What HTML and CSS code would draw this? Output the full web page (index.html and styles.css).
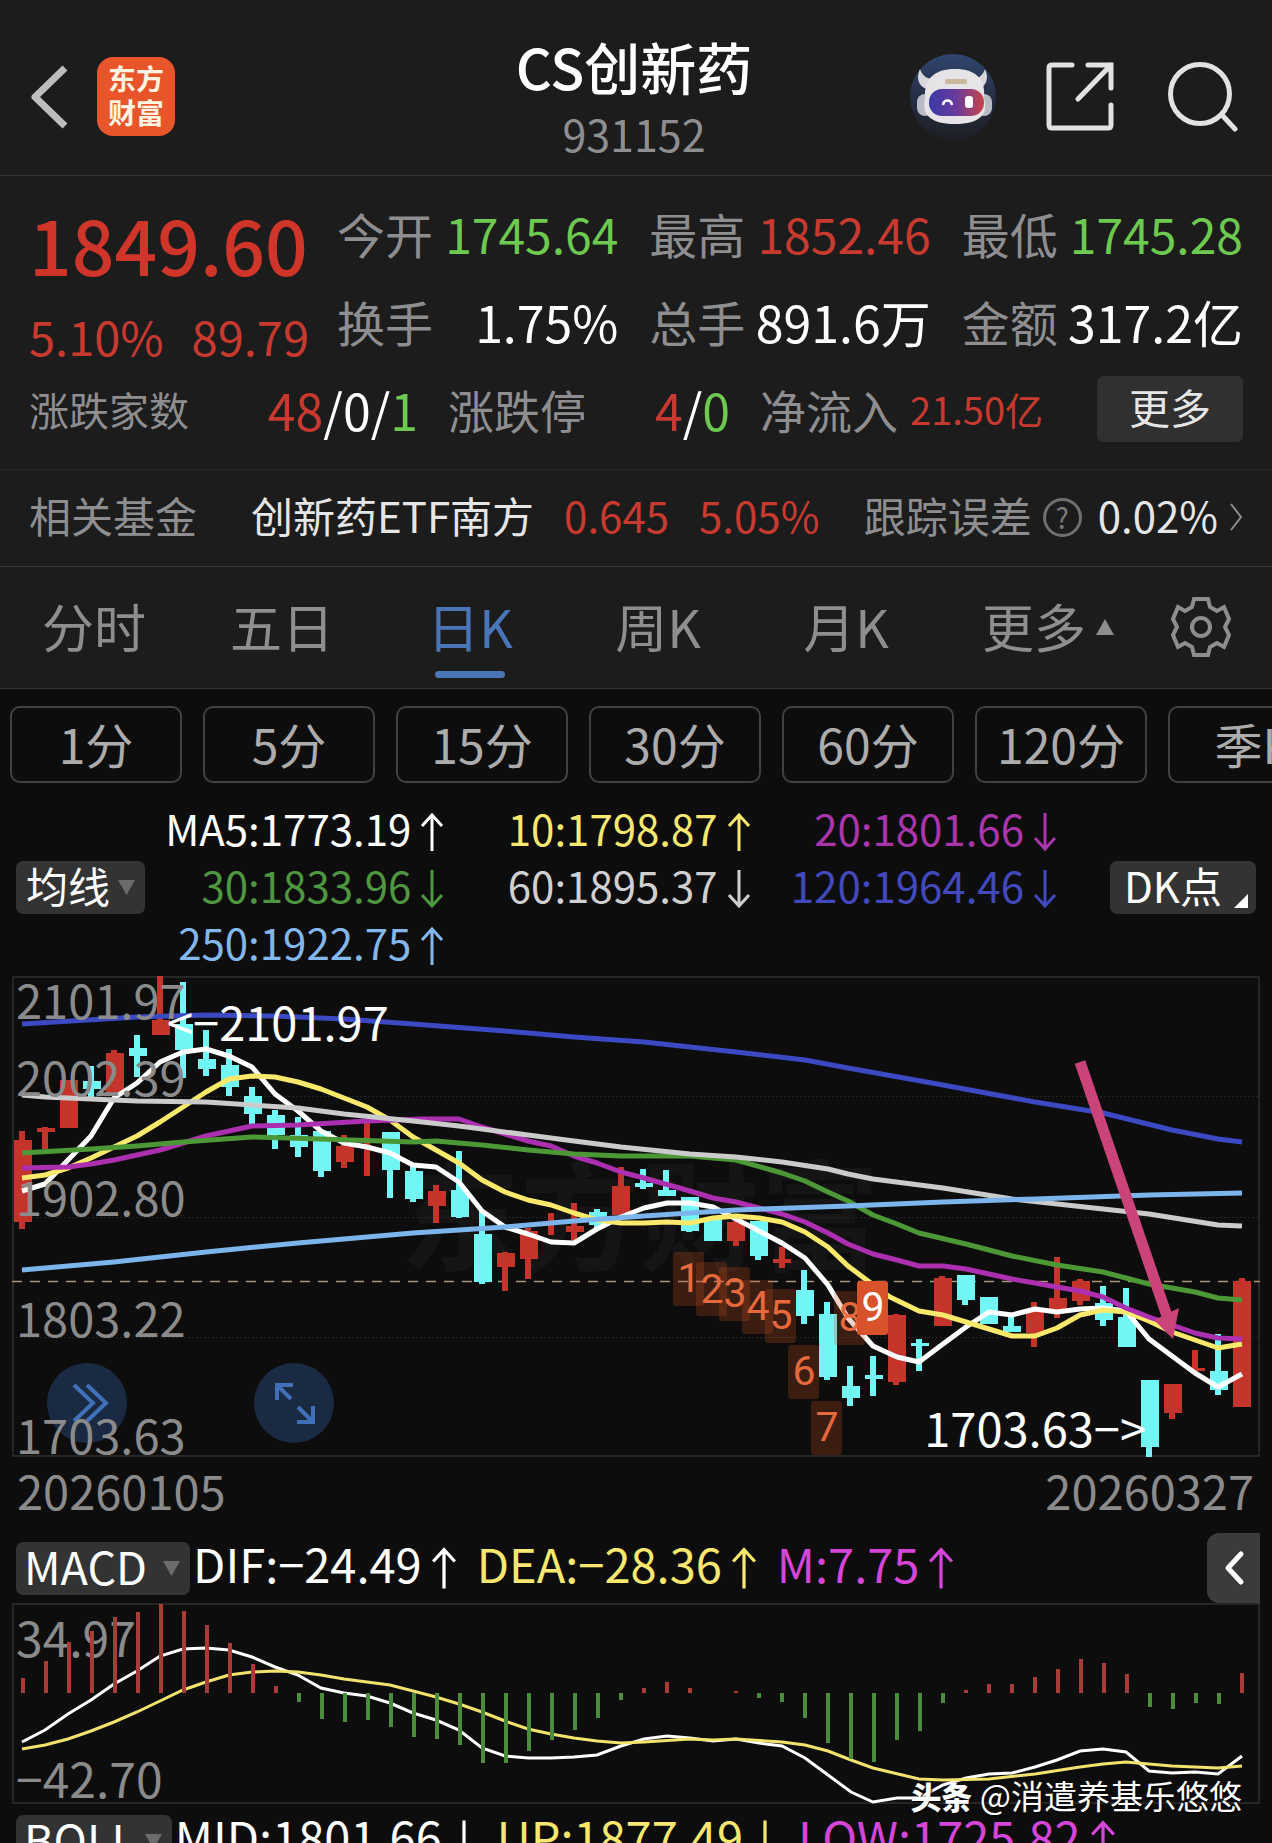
FILE: index.html
```html
<!DOCTYPE html>
<html lang="zh-CN">
<head>
<meta charset="utf-8">
<meta name="viewport" content="width=device-width, initial-scale=1">
<title>CS创新药 931152</title>
<link rel="stylesheet" href="styles.css">
</head>
<body>
<svg class="defs" width="0" height="0" aria-hidden="true">
  <symbol id="up" viewBox="0 0 24 38"><path d="M12 38V2M2 13L12 2L22 13" fill="none" stroke="currentColor" stroke-width="3"/></symbol>
  <symbol id="down" viewBox="0 0 24 38"><path d="M12 0V36M2 25L12 36L22 25" fill="none" stroke="currentColor" stroke-width="3"/></symbol>
  <symbol id="caret" viewBox="0 0 17 15"><path d="M0 0H17L8.500 15Z" fill="#6c6c6c"/></symbol>
</svg>
<div class="app">
  <header class="topbar">
    <div class="side">
      <button class="plain" aria-label="返回"><svg width="38" height="66" viewBox="0 0 38 66"><path d="M35 4L5 33L35 62" fill="none" stroke="#bdbdbd" stroke-width="7" stroke-linejoin="round"/></svg></button>
      <a class="logo" href="#home"><span>东方</span><span>财富</span></a>
    </div>
    <div class="heading">
      <h1>CS创新药</h1>
      <p>931152</p>
    </div>
    <div class="side actions">
      <button class="plain" aria-label="智能助手">
        <svg width="86" height="86" viewBox="0 0 86 86">
          <defs>
            <linearGradient id="disc" x1="0" y1="0" x2="0" y2="1"><stop offset="0" stop-color="#31456f"/><stop offset=".55" stop-color="#242c40"/><stop offset="1" stop-color="#1d1f25"/></linearGradient>
            <linearGradient id="visor" x1="0" y1="0" x2="1" y2="0"><stop offset="0" stop-color="#3a3aa8"/><stop offset=".5" stop-color="#6a3a9c"/><stop offset="1" stop-color="#c8454a"/></linearGradient>
          </defs>
          <circle cx="43" cy="43" r="43" fill="url(#disc)"/>
          <path d="M10 15C6 24 8 32 17 35L24 25C16 25 12 21 10 15ZM75 15C79 24 77 32 68 35L61 25C69 25 73 21 75 15Z" fill="#d8d8dc"/>
          <rect x="7" y="40" width="16" height="22" rx="8" fill="#b9bbc4"/>
          <rect x="66" y="40" width="16" height="22" rx="8" fill="#b9bbc4"/>
          <path d="M15 44C14 25 24 15 45 15C66 15 76 25 74 44C79 60 70 70 45 70C20 70 11 60 15 44Z" fill="#e6e4e6"/>
          <rect x="35" y="25" width="22" height="5" rx="2" fill="#c9b79c"/>
          <rect x="19" y="35" width="55" height="27" rx="13" fill="url(#visor)"/>
          <path d="M33 51C34 45 41 45 42 51" fill="none" stroke="#fff" stroke-width="2.500"/>
          <rect x="55" y="42" width="8" height="12" rx="3" fill="#fff"/>
        </svg>
      </button>
      <button class="plain share" aria-label="分享"><svg width="68" height="69" viewBox="0 0 68 69"><path d="M26 3H6Q3 3 3 6V63Q3 66 6 66H62Q65 66 65 63V43M42 3H65V26M65 3L32 37" fill="none" stroke="#e2e2e2" stroke-width="5" stroke-linecap="round"/></svg></button>
      <button class="plain" aria-label="搜索"><svg width="70" height="70" viewBox="0 0 70 70"><circle cx="32" cy="32" r="29.500" fill="none" stroke="#e2e2e2" stroke-width="5"/><path d="M54 53L67 67" stroke="#e2e2e2" stroke-width="5" stroke-linecap="round"/></svg></button>
    </div>
  </header>

  <section class="quote">
    <div class="quote-main">
      <div class="last">
        <strong class="price">1849.60</strong>
        <div class="change"><span>5.10%</span><span>89.79</span></div>
      </div>
      <dl class="stats">
        <div><dt>今开</dt><dd class="green">1745.64</dd></div>
        <div><dt>最高</dt><dd class="red">1852.46</dd></div>
        <div><dt>最低</dt><dd class="green">1745.28</dd></div>
        <div><dt>换手</dt><dd class="volume">1.75%</dd></div>
        <div><dt>总手</dt><dd class="volume">891.6万</dd></div>
        <div><dt>金额</dt><dd class="volume">317.2亿</dd></div>
      </dl>
    </div>
    <div class="breadth">
      <div class="pair"><span class="label small">涨跌家数</span><span class="value"><span class="red">48</span>/0/<span class="green">1</span></span></div>
      <div class="pair"><span class="label">涨跌停</span><span class="value"><span class="red">4</span>/<span class="green">0</span></span></div>
      <div class="pair"><span class="label">净流入</span><span class="red inflow">21.50亿</span></div>
      <button class="more">更多</button>
    </div>
  </section>

  <section class="fund">
    <span class="label fund-label">相关基金</span>
    <a href="#fund">创新药ETF南方</a>
    <span class="red">0.645</span>
    <span class="red">5.05%</span>
    <div class="tracking">
      <span class="label">跟踪误差</span>
      <button class="help" aria-label="说明">?</button>
      <span>0.02%</span>
      <svg width="14" height="28" viewBox="0 0 14 28"><path d="M2 1L12 14L2 27" fill="none" stroke="#8e8e90" stroke-width="2"/></svg>
    </div>
  </section>

  <nav class="tabs">
    <button>分时</button>
    <button>五日</button>
    <button class="active">日K</button>
    <button>周K</button>
    <button>月K</button>
    <button>更多<svg width="18" height="16" viewBox="0 0 18 16"><path d="M9 0L18 16H0Z" fill="#8e8e90"/></svg></button>
    <button aria-label="设置"><svg class="gear" width="60" height="60" viewBox="0 0 60 60"><path d="M23 2H37L39 10L46 14L53 10L58 22L54 30L58 38L53 50L46 46L39 50L37 58H23L21 50L14 46L7 50L2 38L6 30L2 22L7 10L14 14L21 10Z" fill="none" stroke="#8e8e90" stroke-width="4"/><circle cx="30" cy="30" r="9" fill="none" stroke="#8e8e90" stroke-width="4"/></svg></button>
  </nav>

  <div class="periods">
    <button>1分</button><button>5分</button><button>15分</button><button>30分</button><button>60分</button><button>120分</button><button>季K</button>
  </div>

  <section class="averages">
    <button class="chip">均线<svg width="17" height="15"><use href="#caret"/></svg></button>
    <ul>
      <li class="c-white">MA5:1773.19<svg width="24" height="38"><use href="#up"/></svg></li>
      <li class="c-yellow">10:1798.87<svg width="24" height="38"><use href="#up"/></svg></li>
      <li class="c-purple">20:1801.66<svg width="24" height="38"><use href="#down"/></svg></li>
      <li class="c-green">30:1833.96<svg width="24" height="38"><use href="#down"/></svg></li>
      <li class="c-grey">60:1895.37<svg width="24" height="38"><use href="#down"/></svg></li>
      <li class="c-blue">120:1964.46<svg width="24" height="38"><use href="#down"/></svg></li>
      <li class="c-sky">250:1922.75<svg width="24" height="38"><use href="#up"/></svg></li>
    </ul>
    <button class="chip dk">DK点<svg width="14" height="14" viewBox="0 0 14 14"><path d="M14 0V14H0Z" fill="#fff"/></svg></button>
  </section>

  <section class="chart">
    <button class="round forward" aria-label="快进"><svg width="80" height="80" viewBox="0 0 80 80"><path d="M27 22L46 40L27 58M40 22L59 40L40 58" fill="none" stroke="#3f70b8" stroke-width="4"/></svg></button>
    <button class="round expand" aria-label="全屏"><svg width="80" height="80" viewBox="0 0 80 80"><path d="M23 37V22H39M23 22L37 36M59 43V59H43M59 59L44 44" fill="none" stroke="#3f70b8" stroke-width="4"/></svg></button>
    <svg class="plot" viewBox="12 976 1248 481" role="img" aria-label="日K线图">
      <text class="backdrop" x="400" y="1262">东方财富</text>
      <path d="M12 1096.500H1260M12 1217.500H1260M12 1337.500H1260" stroke="#242424" stroke-dasharray="2 2"/>
      <rect x="13" y="977" width="1246" height="479" fill="none" stroke="#262626" stroke-width="2"/>
      <path d="M12 1281.500H1260" stroke="#a8957c" stroke-width="1.500" stroke-dasharray="10 8"/>
      <g fill="none" stroke="#c4342b" shape-rendering="crispEdges">
        <path stroke-width="6" d="M22 1131V1229M45 1127V1149M114 1050V1093M160 976V1035M344 1135V1168M367 1122V1176M436 1185V1223M505 1252V1291M528 1228V1279M551 1213V1235M574 1203V1240M621 1167V1215M736 1221V1246M782 1247V1268M896 1314V1385M942 1276V1326M1034 1302V1347M1057 1257V1318M1080 1279V1305M1172 1384V1419M1195 1350V1371M1242 1278V1407"/>
        <path stroke-width="18" d="M23 1140V1222M46 1128V1132M69 1080V1128M115 1053V1093M161 1020V1035M345 1146V1162M437 1191V1206M506 1253V1267M529 1231V1259M575 1226V1232M621 1186V1215M736 1222V1241M782 1259V1263M897 1315V1382M943 1278V1326M1035 1312V1333M1058 1298V1309M1081 1281V1301M1173 1384V1413M1242 1281V1407"/>
        <path stroke-width="12" d="M1199 1368V1371"/>
      </g>
      <g fill="none" stroke="#72f6f5" shape-rendering="crispEdges">
        <path stroke-width="6" d="M91 1066V1097M137 1035V1077M183 982V1078M206 1030V1076M229 1049V1096M252 1087V1124M275 1110V1149M298 1117V1157M321 1131V1177M390 1132V1198M413 1166V1202M459 1151V1218M482 1210V1284M597 1209V1230M643 1169V1189M666 1170V1196M689 1197V1232M758 1221V1260M804 1270V1324M827 1302V1380M850 1366V1406M873 1356V1396M919 1339V1371M965 1275V1305M1011 1314V1332M1103 1286V1326M1126 1288V1347M1149 1380V1457M1218 1334V1395"/>
        <path stroke-width="18" d="M92 1081V1089M138 1048V1056M184 1024V1050M207 1059V1069M230 1065V1087M253 1096V1114M276 1115V1135M299 1135V1147M322 1131V1171M391 1132V1170M414 1171V1199M460 1190V1217M483 1234V1282M598 1212V1225M644 1183V1187M667 1190V1196M690 1197V1231M713 1219V1241M759 1221V1256M805 1290V1316M828 1314V1377M851 1386V1398M874 1375V1379M920 1343V1346M966 1275V1300M989 1297V1324M1012 1326V1332M1104 1303V1320M1127 1317V1347M1150 1380V1447M1219 1371V1390"/>
      </g>
      <g fill="none" stroke-width="5" stroke-linejoin="round">
        <polyline stroke="#fff" points="22,1191 45,1184 68,1160 91,1136 114,1098 137,1083 160,1062 183,1052 206,1049 229,1056 252,1067 275,1094 298,1111 321,1131 344,1143 367,1147 390,1153 413,1165 436,1167 459,1182 482,1211 505,1227 528,1234 551,1242 574,1243 597,1229 621,1217 644,1208 667,1203 690,1203 713,1207 736,1219 759,1231 782,1243 805,1258 828,1285 848,1318 873,1346 897,1357 919,1362 943,1344 966,1327 989,1312 1012,1315 1035,1309 1057,1312 1080,1309 1103,1308 1126,1311 1149,1339 1172,1356 1195,1373 1218,1387 1242,1374"/>
        <polyline stroke="#fbe96c" points="22,1178 45,1175 68,1168 91,1158 114,1147 137,1136 160,1122 183,1107 206,1092 229,1079 252,1076 275,1077 298,1082 321,1089 344,1098 367,1107 390,1120 413,1137 436,1150 459,1163 482,1180 505,1192 528,1200 551,1205 574,1213 597,1220 621,1223 644,1223 667,1222 690,1223 713,1218 736,1216 759,1218 782,1222 805,1232 828,1247 848,1266 868,1281 890,1297 919,1311 943,1315 966,1322 989,1329 1012,1336 1035,1336 1057,1328 1080,1315 1103,1310 1126,1312 1149,1321 1172,1332 1195,1340 1218,1348 1242,1344"/>
        <polyline stroke="#ac2fb0" points="22,1168 68,1167 91,1164 114,1160 137,1155 160,1150 183,1143 206,1136 252,1126 298,1125 367,1121 424,1119 459,1119 482,1127 505,1134 528,1141 551,1146 574,1156 597,1163 621,1172 644,1178 690,1191 713,1198 736,1202 759,1208 782,1214 805,1222 828,1233 848,1244 873,1254 897,1260 919,1266 943,1266 966,1269 989,1274 1012,1279 1035,1283 1057,1287 1080,1291 1103,1297 1126,1308 1149,1317 1172,1325 1195,1333 1218,1338 1242,1339"/>
        <polyline stroke="#4c9836" points="22,1153 91,1149 137,1146 183,1142 252,1137 320,1139 413,1142 436,1141 482,1145 528,1150 574,1154 621,1156 690,1156 736,1160 782,1173 805,1181 828,1192 848,1201 873,1215 897,1224 919,1233 966,1244 1012,1256 1057,1265 1103,1272 1149,1284 1195,1292 1218,1298 1242,1300"/>
        <polyline stroke="#cbcbcb" points="22,1095 45,1097 137,1101 206,1102 298,1108 344,1114 413,1121 459,1126 528,1135 574,1141 621,1147 690,1154 736,1157 782,1162 828,1169 848,1174 873,1179 943,1188 1012,1199 1103,1209 1149,1214 1218,1225 1242,1226"/>
        <polyline stroke="#7cb4ec" points="22,1270 114,1262 206,1252 298,1243 413,1233 505,1227 574,1221 644,1216 736,1210 848,1206 943,1202 1035,1199 1149,1195 1242,1193"/>
        <polyline stroke="#3b49c2" points="22,1024 137,1017 206,1015 275,1016 344,1019 413,1024 505,1031 574,1037 644,1042 736,1052 805,1060 848,1068 943,1085 1035,1102 1103,1113 1172,1130 1218,1139 1242,1142"/>
      </g>
      <g class="counts">
        <g fill="#c8501e" fill-opacity=".25">
          <rect x="673" y="1252" width="31" height="54" rx="3"/><rect x="696" y="1262" width="31" height="54" rx="3"/><rect x="719" y="1267" width="31" height="54" rx="3"/><rect x="742" y="1280" width="31" height="54" rx="3"/><rect x="765" y="1289" width="31" height="54" rx="3"/><rect x="788" y="1345" width="31" height="54" rx="3"/><rect x="811" y="1401" width="31" height="54" rx="3"/><rect x="834" y="1291" width="31" height="54" rx="3"/>
        </g>
        <g fill="#e6693d">
          <text x="689" y="1292">1</text><text x="712" y="1303">2</text><text x="735" y="1307">3</text><text x="758" y="1320">4</text><text x="781" y="1329">5</text><text x="804" y="1385">6</text><text x="827" y="1441">7</text><text x="850" y="1331">8</text>
        </g>
        <rect x="857" y="1281" width="31" height="54" rx="3" fill="#d9532a"/>
        <text x="873" y="1321" fill="#fff">9</text>
      </g>
      <path d="M1080 1062L1167 1316" stroke="#cb4479" stroke-width="11"/>
      <path d="M1154 1320L1179 1308L1173 1339Z" fill="#cb4479"/>
      <g class="axis">
        <text x="16" y="1019">2101.97</text><text x="16" y="1096">2002.39</text><text x="16" y="1216">1902.80</text><text x="16" y="1337">1803.22</text><text x="16" y="1454">1703.63</text>
      </g>
      <g class="marks">
        <text x="167" y="1041">&lt;−2101.97</text>
        <text x="1146" y="1447" text-anchor="end">1703.63−&gt;</text>
      </g>
    </svg>
  </section>
  <div class="dates"><time>20260105</time><time>20260327</time></div>

  <section class="indicator">
    <button class="chip">MACD<svg width="17" height="15"><use href="#caret"/></svg></button>
    <ul>
      <li class="c-white">DIF:−24.49<svg width="26" height="42"><use href="#up"/></svg></li>
      <li class="c-yellow">DEA:−28.36<svg width="26" height="42"><use href="#up"/></svg></li>
      <li class="c-magenta">M:7.75<svg width="26" height="42"><use href="#up"/></svg></li>
    </ul>
    <button class="collapse" aria-label="展开"><svg width="22" height="36" viewBox="0 0 22 36"><path d="M18 4L5 18L18 32" fill="none" stroke="#fff" stroke-width="5" stroke-linecap="round" stroke-linejoin="round"/></svg></button>
  </section>
  <section class="macd">
    <svg class="plot" viewBox="12 1603 1248 201" role="img" aria-label="MACD">
      <rect x="13" y="1604" width="1246" height="199" fill="none" stroke="#262626" stroke-width="2"/>
      <g class="axis large"><text x="16" y="1657">34.97</text><text x="16" y="1798">−42.70</text></g>
      <g fill="none" stroke-width="3">
        <polyline stroke="#fff" points="22,1742 45,1730 68,1714 91,1700 114,1684 137,1671 160,1656 183,1649 206,1648 229,1650 252,1657 275,1667 298,1675 321,1688 344,1693 367,1696 390,1703 413,1713 436,1720 459,1730 482,1748 505,1756 528,1758 551,1758 574,1757 597,1755 621,1746 644,1739 667,1736 690,1738 713,1741 736,1739 759,1743 782,1746 805,1758 828,1775 851,1792 873,1802 897,1798 919,1798 943,1785 966,1778 989,1774 1012,1773 1035,1767 1057,1760 1080,1751 1103,1749 1126,1752 1149,1771 1172,1773 1195,1772 1218,1774 1242,1756"/>
        <polyline stroke="#f3e36c" points="22,1749 45,1745 68,1739 91,1731 114,1722 137,1712 160,1701 183,1690 206,1682 229,1675 252,1672 275,1671 298,1672 321,1675 344,1679 390,1685 413,1691 436,1697 459,1704 482,1712 505,1721 528,1729 551,1734 574,1738 597,1741 621,1743 644,1742 690,1739 713,1740 736,1739 782,1742 805,1745 828,1751 851,1760 873,1768 919,1779 943,1780 989,1779 1035,1774 1080,1767 1103,1764 1126,1762 1172,1766 1218,1768 1242,1766"/>
      </g>
      <g fill="none" stroke-width="4" shape-rendering="crispEdges">
        <path stroke="#a83c37" d="M23 1678V1693M46 1661V1693M69 1642V1693M92 1631V1693M115 1617V1693M138 1612V1693M161 1604V1693M184 1611V1693M207 1625V1693M230 1643V1693M253 1664V1693M276 1686V1693M644 1688V1693M667 1682V1693M690 1688V1693M736 1691V1693M966 1690V1693M989 1684V1693M1012 1684V1693M1035 1677V1693M1058 1669V1693M1081 1659V1693M1104 1663V1693M1127 1674V1693M1242 1673V1693"/>
        <path stroke="#4a8c3c" d="M299 1693V1702M322 1693V1719M345 1693V1722M368 1693V1720M391 1693V1727M414 1693V1737M437 1693V1739M460 1693V1745M483 1693V1763M506 1693V1763M529 1693V1751M552 1693V1740M575 1693V1730M598 1693V1718M621 1693V1700M759 1693V1698M782 1693V1702M805 1693V1718M828 1693V1743M851 1693V1759M874 1693V1762M897 1693V1740M920 1693V1731M943 1693V1703M1150 1693V1707M1173 1693V1709M1196 1693V1703M1219 1693V1704"/>
      </g>
    </svg>
    <p class="credit"><b>头条</b> @消遣养基乐悠悠</p>
  </section>
  <section class="indicator boll">
    <button class="chip">BOLL<svg width="17" height="15"><use href="#caret"/></svg></button>
    <ul>
      <li class="c-white">MID:1801.66<svg width="26" height="42"><use href="#down"/></svg></li>
      <li class="c-yellow">UP:1877.49<svg width="26" height="42"><use href="#down"/></svg></li>
      <li class="c-magenta">LOW:1725.82<svg width="26" height="42"><use href="#up"/></svg></li>
    </ul>
  </section>
</div>
</body>
</html>
```
FILE: styles.css
```css
* { box-sizing: border-box; margin: 0; padding: 0; }
body {
  background: #0d0d0d;
  color: #fff;
  font-family: "Noto Sans CJK SC", "Noto Sans", sans-serif;
}
button {
  font: inherit;
  color: inherit;
  background: none;
  border: 0;
}
a { color: inherit; text-decoration: none; }
ul { list-style: none; }
svg { display: block; flex: none; }
.defs { position: absolute; }
.app { height: 100vh; overflow: hidden; }

.red { color: #c8392f; }
.green { color: #6dc94f; }
.label { color: #8e8e90; }
.c-white { color: #fff; }
.c-yellow { color: #f8e870; }
.c-purple { color: #ab35ab; }
.c-green { color: #4f9640; }
.c-grey { color: #d0d0d0; }
.c-blue { color: #4149bd; }
.c-sky { color: #82b8ec; }
.c-magenta { color: #d545d8; }

/* Title bar */
.topbar {
  display: grid;
  grid-template-columns: 1fr auto 1fr;
  align-items: center;
  height: 176px;
  padding: 18px 34px 0 30px;
  background: #1c1c1c;
  border-bottom: 1px solid #363636;
}
.side { display: flex; align-items: center; gap: 29px; }
.actions { justify-content: flex-end; gap: 50px; }
.share { margin-right: 4px; }
.logo {
  display: flex;
  flex-direction: column;
  align-items: center;
  width: 78px;
  height: 79px;
  padding-top: 4px;
  border-radius: 16px;
  background: #e8552b;
  color: #fff4e2;
  font-size: 28px;
  font-weight: 700;
  line-height: 34px;
}
.heading { text-align: center; }
.heading h1 { font-size: 56px; font-weight: 500; line-height: 66px; }
.heading p { margin-top: 6px; font-size: 43px; line-height: 56px; color: #8e8e90; }

/* Quote summary */
.quote {
  padding: 13px 29px 24px;
  background: #1c1c1c;
  border-bottom: 1px solid #252525;
}
.quote-main {
  display: grid;
  grid-template-columns: 280fr 906fr;
  gap: 28px;
}
.last { color: #d0352a; }
.price { display: block; font-size: 75px; font-weight: 500; line-height: 110px; }
.change {
  display: flex;
  justify-content: space-between;
  font-size: 47px;
  line-height: 74px;
  color: #c8392f;
}
.stats {
  display: grid;
  grid-template-columns: repeat(3, 1fr);
  column-gap: 31px;
  align-content: start;
}
.stats div {
  display: flex;
  justify-content: space-between;
  font-size: 48px;
  line-height: 88px;
  white-space: nowrap;
}
.stats dt { color: #8e8e90; }
.volume { font-size: 50px; }
.breadth {
  display: grid;
  grid-template-columns: 389fr 282fr 283fr 170fr;
  column-gap: 30px;
  font-size: 46px;
  line-height: 72px;
  white-space: nowrap;
}
.pair { display: flex; justify-content: space-between; }
.small { font-size: 40px; }
.value { font-size: 50px; }
.inflow { font-size: 38px; }
.more {
  justify-self: end;
  align-self: center;
  width: 146px;
  height: 66px;
  padding-bottom: 6px;
  border-radius: 6px;
  background: #303030;
  color: #e6e6e6;
  font-size: 41px;
  line-height: 60px;
}

/* Related fund */
.fund {
  display: flex;
  align-items: center;
  gap: 30px;
  height: 97px;
  padding: 0 29px 8px;
  background: #1c1c1c;
  border-bottom: 1px solid #363636;
  color: #e6e6e6;
  font-size: 42px;
  white-space: nowrap;
}
.fund-label { margin-right: 24px; }
.tracking { display: flex; align-items: center; gap: 11px; margin-left: auto; }
.help {
  width: 39px;
  height: 39px;
  margin: 6px 5px 0 0;
  border: 3px solid #6f6f70;
  border-radius: 50%;
  color: #7c7c7d;
  font-size: 28px;
  line-height: 30px;
}
.tracking svg { margin-top: 6px; }

/* Chart type tabs */
.tabs {
  display: grid;
  grid-template-columns: repeat(5, 188fr) 216fr 90fr;
  height: 122px;
  padding-right: 26px;
  background: #1c1c1c;
  border-bottom: 1px solid #363636;
  color: #8e8e90;
  font-size: 52px;
}
.tabs button {
  position: relative;
  display: flex;
  align-items: center;
  justify-content: center;
  gap: 10px;
  padding-bottom: 4px;
}
.tabs svg { margin-top: 2px; }
.tabs .active { color: #4a76b8; }
.tabs .active::after {
  content: "";
  position: absolute;
  bottom: 10px;
  left: calc(50% - 35px);
  width: 70px;
  height: 7px;
  border-radius: 4px;
  background: #4a76b8;
}

/* Minute periods */
.periods {
  display: flex;
  gap: 21px;
  padding: 17px 0 16px 10px;
  overflow: hidden;
}
.periods button {
  flex: none;
  width: 172px;
  height: 77px;
  padding-bottom: 4px;
  border: 2px solid #414141;
  border-radius: 10px;
  color: #acacac;
  font-size: 48px;
  line-height: 66px;
}

/* Moving averages */
.averages {
  display: flex;
  align-items: center;
  padding: 0 16px 6px;
}
.chip {
  display: flex;
  align-items: center;
  gap: 8px;
  height: 53px;
  padding: 0 10px 6px;
  border-radius: 7px;
  background: #333;
  font-size: 42px;
  line-height: 47px;
}
.chip svg { margin-top: 6px; }
.averages .chip { margin-top: 6px; }
.averages ul {
  flex: 1;
  display: grid;
  grid-template-columns: 299fr 306fr 306fr;
  margin-right: 53px;
  font-size: 42px;
  line-height: 57px;
}
.averages li {
  display: flex;
  align-items: center;
  justify-content: flex-end;
  gap: 9px;
  white-space: nowrap;
}
.averages li svg { margin-top: 8px; }
.dk { gap: 12px; padding-left: 14px; padding-right: 8px; }
.dk svg { align-self: flex-end; }

/* Candlestick chart */
.chart, .macd { position: relative; margin: 0 12px; }
.plot { position: relative; width: 100%; height: auto; pointer-events: none; }
.round {
  position: absolute;
  top: 387px;
  width: 80px;
  height: 80px;
  border-radius: 50%;
  background: #1b2a43;
}
.forward { left: 35px; }
.expand { left: 242px; }
.backdrop { font-size: 120px; font-weight: 700; fill: #151515; }
.axis { font-size: 47px; fill: #8b8b8b; }
.axis.large { font-size: 48px; }
.marks { font-size: 47px; fill: #fff; }
.counts { font-family: Roboto, sans-serif; font-size: 41px; text-anchor: middle; }
.dates {
  display: flex;
  justify-content: space-between;
  padding: 3px 18px 13px 17px;
  font-size: 47px;
  line-height: 60px;
  color: #8b8b8b;
}

/* Indicator rows */
.indicator {
  display: flex;
  align-items: center;
  height: 70px;
  margin: 0 12px;
  padding-left: 4px;
}
.indicator .chip { gap: 16px; padding-left: 8px; font-size: 45px; }
.indicator ul {
  display: flex;
  gap: 20px;
  margin-left: 3px;
  padding-bottom: 11px;
  font-size: 47px;
  line-height: 58px;
}
.indicator li { display: flex; align-items: center; gap: 9px; white-space: nowrap; }
.indicator li svg { margin-top: 10px; }
.collapse {
  display: flex;
  align-items: center;
  justify-content: center;
  width: 53px;
  height: 70px;
  margin-left: auto;
  border-radius: 12px 0 0 12px;
  background: #3b3b3b;
}
.boll { margin-top: 2px; }
.indicator.boll .chip { gap: 9px; }
.credit {
  position: absolute;
  right: 18px;
  bottom: -12px;
  font-size: 33px;
  line-height: 40px;
  text-shadow: 1px 1px 2px #000;
}
.credit b { font-size: 31px; font-weight: 900; }
```
